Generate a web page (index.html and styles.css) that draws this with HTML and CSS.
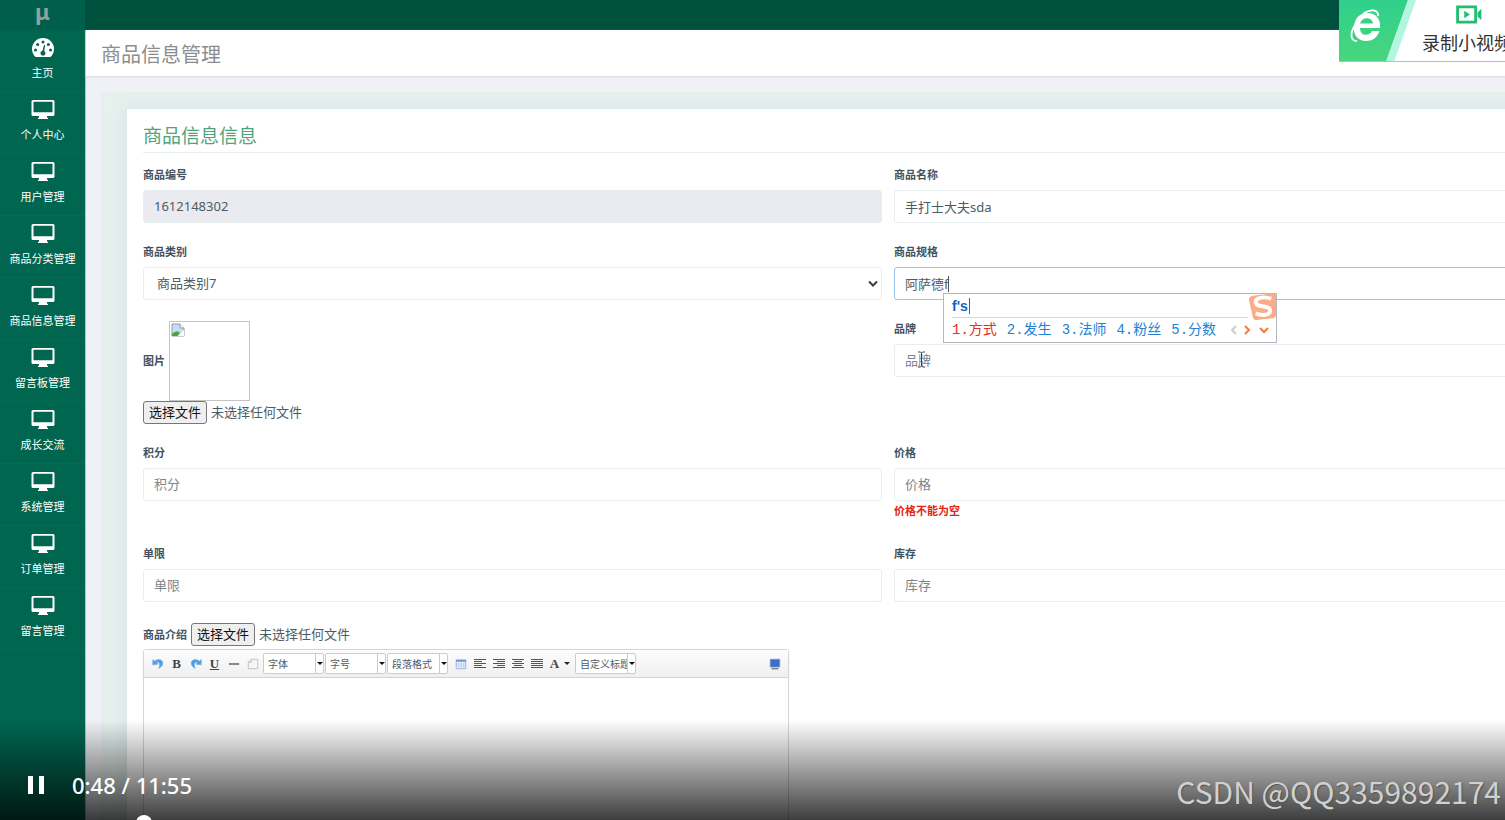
FILE: index.html
```html
<!DOCTYPE html>
<html lang="zh-CN">
<head>
<meta charset="utf-8">
<title>商品信息管理</title>
<link rel="stylesheet" href="styles.css">
</head>
<body>
<svg class="defs" aria-hidden="true">
  <symbol id="monitor" viewBox="0 0 24 20"><path fill="currentColor" fill-rule="evenodd" d="M2 0h20a1.500 1.500 0 0 1 1.500 1.500v13A1.500 1.500 0 0 1 22 16h-6v1.500l1 .5v1H7v-1l1-.5V16H2a1.500 1.500 0 0 1-1.500-1.500v-13A1.500 1.500 0 0 1 2 0zm.5 1.800v10.400h19V1.800z"/></symbol>
  <symbol id="undo" viewBox="0 0 14 14"><path d="M1 2v6l6-1-2-1.500c3-2 5.500 1 3 6.500 6-3 6-10 0-10C6 2 4.500 2.500 3.200 3.700z" fill="#559be0" stroke="#6fabea" stroke-width="1"/></symbol>
</svg>
<div class="app">
  <aside class="sidebar">
    <div class="logo">μ</div>
    <nav class="menu">
      <a class="menu-item" href="#"><svg class="menu-icon" viewBox="0 0 24 20"><path fill="#fff" d="M4.500 19A11 11 0 0 1 1 11a11 11 0 0 1 22 0 11 11 0 0 1-3.500 8z"/><g fill="#006650"><circle cx="4.500" cy="12" r="1.500"/><circle cx="6.700" cy="6.500" r="1.500"/><circle cx="12" cy="4" r="1.500"/><circle cx="17.300" cy="6.500" r="1.500"/><circle cx="19.500" cy="12" r="1.500"/><path d="M13 7l1.200.3-1 5.700a2.500 2.500 0 1 1-1.700-.3z"/></g></svg>主页</a>
      <a class="menu-item" href="#"><svg class="menu-icon"><use href="#monitor"/></svg>个人中心</a>
      <a class="menu-item" href="#"><svg class="menu-icon"><use href="#monitor"/></svg>用户管理</a>
      <a class="menu-item" href="#"><svg class="menu-icon"><use href="#monitor"/></svg>商品分类管理</a>
      <a class="menu-item" href="#"><svg class="menu-icon"><use href="#monitor"/></svg>商品信息管理</a>
      <a class="menu-item" href="#"><svg class="menu-icon"><use href="#monitor"/></svg>留言板管理</a>
      <a class="menu-item" href="#"><svg class="menu-icon"><use href="#monitor"/></svg>成长交流</a>
      <a class="menu-item" href="#"><svg class="menu-icon"><use href="#monitor"/></svg>系统管理</a>
      <a class="menu-item" href="#"><svg class="menu-icon"><use href="#monitor"/></svg>订单管理</a>
      <a class="menu-item" href="#"><svg class="menu-icon"><use href="#monitor"/></svg>留言管理</a>
    </nav>
  </aside>
  <div class="page">
    <header class="topbar"></header>
    <h1 class="page-title">商品信息管理</h1>
    <main class="panel">
      <section class="card">
        <h2 class="card-title">商品信息信息</h2>
        <form class="form">
          <div class="field">
            <label class="label" for="no">商品编号</label>
            <input class="control" id="no" value="1612148302" readonly>
          </div>
          <div class="field">
            <label class="label" for="name">商品名称</label>
            <input class="control" id="name" value="手打士大夫sda">
          </div>
          <div class="field">
            <label class="label" for="type">商品类别</label>
            <div class="select-wrap">
              <select class="control select" id="type"><option>商品类别7</option></select>
              <svg class="chevron" viewBox="0 0 10 8"><path d="M1 1.500l4 4 4-4" fill="none" stroke="#333f4a" stroke-width="2"/></svg>
            </div>
          </div>
          <div class="field">
            <label class="label" for="spec">商品规格</label>
            <input class="control active" id="spec" value="阿萨德f">
            <span class="caret"></span>
            <div class="ime">
              <div class="ime-typed"><span class="ime-text">f's</span></div>
              <div class="ime-row">
                <span class="ime-first">1.方式</span><span>2.发生</span><span>3.法师</span><span>4.粉丝</span><span>5.分数</span>
                <svg class="ime-arrows" viewBox="0 0 40 12"><g fill="none" stroke-width="2"><path d="M9 2L5 6l4 4" stroke="#ccc"/><path d="M18 2l4 4-4 4" stroke="#f5793b"/><path d="M33 4l4 4 4-4" stroke="#f5793b"/></g></svg>
              </div>
              <svg class="ime-logo" viewBox="0 0 30 30"><path d="M4 3l22-3q3 0 3 3v19q0 3-3 4L9 28q-3 0-4-3L1 7q0-3 3-4z" fill="#fcab87"/><path d="M24 6C16 3 7 5 8 10c1 6 15 2 15 8 0 5-9 6-15 3" fill="none" stroke="#fff" stroke-width="4"/></svg>
            </div>
          </div>
          <div class="field">
            <div class="picture-row"><span class="label">图片</span>
              <div class="picture"><svg class="broken" viewBox="0 0 14 14"><path d="M1 1h8l4 4v8H1z" fill="#c9dcf7" stroke="#999"/><path d="M9 1v4h4" fill="#fff" stroke="#999"/><path d="M1 13V11q5-5 8-1l-3 3z" fill="#4aa33d"/><path d="M7 13l6-6v6z" fill="#fff"/></svg></div>
            </div>
            <div class="file-row">
              <input class="file-input" type="file" id="pic"><label class="file-button" for="pic">选择文件</label><span>未选择任何文件</span>
            </div>
          </div>
          <div class="field">
            <label class="label" for="brand">品牌</label>
            <input class="control" id="brand" placeholder="品牌">
            <svg class="ibeam" viewBox="0 0 9 17"><path d="M1 1h2.500l1 1 1-1H8M4.500 2v13M1 16h2.500l1-1 1 1H8" fill="none" stroke="#444"/></svg>
          </div>
          <div class="field">
            <label class="label" for="points">积分</label>
            <input class="control" id="points" placeholder="积分">
          </div>
          <div class="field">
            <label class="label" for="price">价格</label>
            <input class="control" id="price" placeholder="价格">
            <p class="error">价格不能为空</p>
          </div>
          <div class="field">
            <label class="label" for="limit">单限</label>
            <input class="control" id="limit" placeholder="单限">
          </div>
          <div class="field">
            <label class="label" for="stock">库存</label>
            <input class="control" id="stock" placeholder="库存">
          </div>
          <div class="field wide">
            <div class="file-row">
              <span class="label">商品介绍</span><input class="file-input" type="file" id="intro"><label class="file-button" for="intro">选择文件</label><span>未选择任何文件</span>
            </div>
            <div class="editor">
              <div class="toolbar">
                <button class="tool" type="button" aria-label="撤销"><svg class="tool-icon"><use href="#undo"/></svg></button>
                <button class="tool bold" type="button">B</button>
                <button class="tool" type="button" aria-label="重做"><svg class="tool-icon flip"><use href="#undo"/></svg></button>
                <button class="tool under" type="button">U</button>
                <button class="tool" type="button" aria-label="分隔线"><svg class="tool-icon" viewBox="0 0 14 14"><path d="M1 7h12" stroke="#333" stroke-width="1.300"/></svg></button>
                <button class="tool" type="button" aria-label="新建"><svg class="tool-icon" viewBox="0 0 14 14"><path d="M5 1.500h7.500v11h-11V5z" fill="#f6f6f6" stroke="#bbb"/><path d="M5 1.500V5H1.500" fill="none" stroke="#bbb"/></svg></button>
                <span class="combo"><select class="combo-select" aria-label="字体"><option>字体</option></select></span>
                <span class="combo"><select class="combo-select" aria-label="字号"><option>字号</option></select></span>
                <span class="combo"><select class="combo-select" aria-label="段落格式"><option>段落格式</option></select></span>
                <button class="tool table-tool" type="button" aria-label="表格"><svg class="tool-icon" viewBox="0 0 14 14"><path d="M1.500 2.500h11v10h-11z" fill="#fff" stroke="#8ea9dc"/><path d="M1 2h12v2.500H1z" fill="#6f97e0"/><path d="M1 7h12M1 9.500h12M4.500 4v9M7.500 4v9M10.300 4v9" stroke="#a6bce5" stroke-width=".8"/></svg></button>
                <button class="tool" type="button" aria-label="左对齐"><svg class="tool-icon" viewBox="0 0 12 12"><path d="M0 1.500h12M0 3.500h8M0 5.500h12M0 7.500h8M0 9.500h12" stroke="#555"/></svg></button>
                <button class="tool" type="button" aria-label="右对齐"><svg class="tool-icon" viewBox="0 0 12 12"><path d="M0 1.500h12M4 3.500h8M0 5.500h12M4 7.500h8M0 9.500h12" stroke="#555"/></svg></button>
                <button class="tool" type="button" aria-label="居中"><svg class="tool-icon" viewBox="0 0 12 12"><path d="M0 1.500h12M2 3.500h8M0 5.500h12M2 7.500h8M0 9.500h12" stroke="#555"/></svg></button>
                <button class="tool" type="button" aria-label="两端对齐"><svg class="tool-icon" viewBox="0 0 12 12"><path d="M0 1.500h12M0 3.500h12M0 5.500h12M0 7.500h12M0 9.500h12" stroke="#555"/></svg></button>
                <button class="tool color" type="button">A</button>
                <span class="combo"><select class="combo-select" aria-label="自定义标题"><option>自定义标题</option></select></span>
                <button class="tool full" type="button" aria-label="全屏"><svg class="tool-icon" viewBox="0 0 14 14"><path d="M1.500 1.500h11v9h-11z" fill="#3a6fd0" stroke="#7d8fb5"/><path d="M3 12.500h8" stroke="#777" stroke-width="1.500"/></svg></button>
              </div>
              <textarea class="editor-body" aria-label="商品介绍"></textarea>
            </div>
          </div>
        </form>
      </section>
    </main>
  </div>
  <div class="recorder">
    <svg class="recorder-logo" viewBox="0 0 78 62"><defs><linearGradient id="g" x2="0" y2="1"><stop stop-color="#2fd08c"/><stop offset="1" stop-color="#49d67c"/></linearGradient></defs><path d="M0 0h69L47 62H0z" fill="url(#g)"/><path d="M69 0h8L55 62h-8z" fill="#b2f6df"/><path fill="#fff" fill-rule="evenodd" d="M41 28H21c0 8 9 9 12 3h7.500C38 38 33 41 27 41 18 41 14 34 15 26 16 18 21 13 28 13c9 0 14 6 13 15zM21 23.500h13c-1-7-11-7-13 0z"/><path d="M24 14c7-5 16-5 15 2M16 25c-5 8-5 16 2 16" fill="none" stroke="#fff" stroke-width="1.800"/></svg>
    <button class="recorder-button" type="button"><svg class="camera" viewBox="0 0 28 20"><path d="M2 2h19v16H2z" fill="none" stroke="#1fbf70" stroke-width="3"/><path d="M9 6l6 4-6 4zM23 8l4-4v12l-4-4z" fill="#1fbf70"/></svg>录制小视频</button>
  </div>
  <div class="player">
    <button class="pause" type="button" aria-label="暂停"></button>
    <span class="time">0:48 / 11:55</span>
    <span class="watermark">CSDN @QQ3359892174</span>
    <span class="knob"></span>
  </div>
</div>
</body>
</html>
```
FILE: styles.css
```css
* { box-sizing: border-box; }
body {
  margin: 0;
  font: 13px/16px "Noto Sans", "Noto Sans CJK SC", sans-serif;
  color: #4d5b66;
}
button, input, select, textarea { font: inherit; color: inherit; }
h1, h2, p { margin: 0; font-weight: 400; }
.defs { position: absolute; width: 0; height: 0; }
.app { position: relative; display: flex; height: 100vh; overflow: hidden; background: #eff1f6; }

.sidebar { flex: none; width: 86px; background: #006650; border-right: 1px solid #a9c9c4; }
.logo {
  height: 30px;
  background: #005f4b;
  color: #91a39d;
  font-size: 22px;
  font-weight: 700;
  line-height: 22px;
  text-align: center;
}
.menu { display: flex; flex-direction: column; }
.menu-item {
  display: flex;
  flex-direction: column;
  align-items: center;
  gap: 6px;
  height: 62px;
  padding-top: 8px;
  border-bottom: 1px solid #046d56;
  color: #fff;
  font-size: 11px;
  line-height: 18px;
  text-decoration: none;
  white-space: nowrap;
}
.menu-icon { flex: none; width: 24px; height: 20px; }

.page { flex: 1; min-width: 0; }
.topbar { height: 30px; margin-left: -1px; background: #00503e; }
.page-title {
  height: 46px;
  padding-left: 15px;
  background: #fff;
  box-shadow: 0 1px 2px #d5d8dc;
  color: #8d8d8d;
  font-size: 20px;
  line-height: 49px;
}
.panel { margin: 16px -145px 0 15px; padding: 16px 0 0 25px; background: #e6f0ed; }
.card {
  padding: 12px 16px 80px;
  background: #fff;
  border: 1px solid #dde8ea;
  box-shadow: 0 0 16px #d8e5e6;
}
.card-title {
  height: 32px;
  border-bottom: 1px solid #e9ecee;
  color: #4fa57c;
  font-size: 19px;
  line-height: 30px;
}
.form { display: grid; grid-template-columns: 1fr 1fr; gap: 21px 12px; padding-top: 14px; }
.field { position: relative; min-width: 0; }
.wide { grid-column: 1 / -1; }
.label { display: block; color: #44525f; font-size: 11px; font-weight: 700; line-height: 16px; }
.control {
  display: block;
  width: 100%;
  height: 33px;
  margin-top: 7px;
  padding: 0 10px 1px;
  border: 1px solid #e6eef0;
  border-radius: 3px;
  background: #fff;
  outline: 0;
}
.control::placeholder { color: #7d858b; opacity: 1; }
.control[readonly] { background: #e9ebf0; }
.control.active { border-color: #9cc6ec; }
.select-wrap { position: relative; }
.select { appearance: none; padding-left: 13px; }
.chevron { position: absolute; right: 4px; top: 13px; width: 10px; height: 8px; }
.caret { position: absolute; left: 54px; top: 32px; width: 1px; height: 16px; background: #555; }
.ibeam { position: absolute; left: 23px; top: 30px; width: 9px; height: 17px; }
.error { padding: 2px 0 6px; color: #e52513; font-size: 11px; font-weight: 700; }

.picture-row { display: flex; align-items: center; gap: 4px; }
.picture { width: 81px; height: 80px; border: 1px solid #c4c4c4; }
.broken { display: block; width: 14px; height: 14px; margin: 1px; }
.file-row { position: relative; display: flex; align-items: center; gap: 4px; line-height: 15px; }
.file-input { position: absolute; width: 1px; height: 1px; opacity: 0; }
.file-button {
  padding: 3px 5px;
  border: 1px solid #777;
  border-radius: 3px;
  background: #efefef;
  color: #111;
}

.editor { width: 646px; margin-top: 3px; border: 1px solid #d4d6d8; border-radius: 3px; }
.toolbar {
  display: flex;
  align-items: center;
  height: 28px;
  padding: 0 4px;
  background: linear-gradient(#fdfdfd, #efeff1);
  border-bottom: 1px solid #d4d4d4;
  box-shadow: 0 1px 3px #ddd;
}
.tool {
  display: flex;
  align-items: center;
  justify-content: center;
  flex: none;
  width: 19px;
  height: 24px;
  padding: 0;
  border: 0;
  background: none;
  color: #444;
  font-family: "Liberation Serif", serif;
  font-weight: 700;
}
.tool-icon { width: 12px; height: 12px; }
.flip { transform: scaleX(-1); }
.under { text-decoration: underline; }
.table-tool { margin-left: 3px; }
.color { width: 28px; gap: 5px; }
.color::after { content: ""; border: 3px solid transparent; border-top-color: #222; border-bottom: 0; }
.full { margin-left: auto; }
.combo { position: relative; flex: none; width: 61px; margin-left: 1px; }
.combo-select {
  display: block;
  appearance: none;
  width: 100%;
  height: 21px;
  padding: 0 8px 0 4px;
  border: 1px solid #ccc;
  border-radius: 2px;
  background: linear-gradient(#ccc, #ccc) right 7px top / 1px 100% no-repeat #fff;
  font-size: 10px;
}
.combo::after {
  content: "";
  position: absolute;
  right: 1px;
  top: 9px;
  border: 3px solid transparent;
  border-top-color: #111;
  border-bottom: 0;
}
.editor-body { display: block; width: 100%; height: 200px; border: 0; resize: none; outline: 0; }

.ime {
  position: absolute;
  z-index: 2;
  left: 49px;
  top: 49px;
  width: 334px;
  padding: 0 8px;
  border: 1px solid #b6b6bf;
  background: #fff;
}
.ime-typed { height: 24px; margin-right: 20px; border-bottom: 1px solid #d8d8dc; line-height: 24px; }
.ime-text {
  padding-right: 1px;
  border-right: 1px solid #b33;
  color: #1463c0;
  font: 700 14px/16px "Liberation Sans", sans-serif;
}
.ime-row {
  display: flex;
  align-items: center;
  gap: 10px;
  height: 24px;
  color: #2382cf;
  font: 14px/24px "Liberation Mono", "Noto Sans CJK SC", monospace;
  white-space: nowrap;
}
.ime-first { color: #e0301e; }
.ime-arrows { flex: none; width: 42px; height: 12px; overflow: visible; }
.ime-logo { position: absolute; right: -1px; top: -1px; width: 29px; height: 29px; }

.recorder {
  position: absolute;
  z-index: 3;
  top: 0;
  right: 0;
  display: flex;
  width: 166px;
  height: 62px;
  overflow: hidden;
  background: #fff;
  border-bottom: 1px solid #bbb;
}
.recorder-logo { flex: none; width: 78px; height: 62px; }
.recorder-button {
  display: flex;
  flex: none;
  flex-direction: column;
  gap: 6px;
  padding: 5px;
  border: 0;
  background: none;
  color: #333;
  font-size: 18px;
  line-height: 26px;
}
.camera { width: 28px; height: 20px; margin-left: 33px; }

.player {
  position: absolute;
  z-index: 4;
  left: 0;
  right: 0;
  bottom: 0;
  display: flex;
  align-items: center;
  height: 100px;
  padding: 30px 4px 0 28px;
  background: linear-gradient(rgba(0, 0, 0, 0), rgba(0, 0, 0, .76));
  color: #fff;
}
.pause { width: 16px; height: 18px; padding: 0; border: solid #fff; border-width: 0 5px; background: none; }
.time { margin-left: 28px; font-size: 22px; font-weight: 500; line-height: 28px; }
.watermark {
  margin: 12px 0 0 auto;
  color: #d0d0d0;
  font: 30px/36px "Noto Sans CJK SC", sans-serif;
  text-shadow: 1px 1px 1px #555;
}
.knob { position: absolute; left: 136px; bottom: -11px; width: 16px; height: 16px; border-radius: 50%; background: #fff; }
```
